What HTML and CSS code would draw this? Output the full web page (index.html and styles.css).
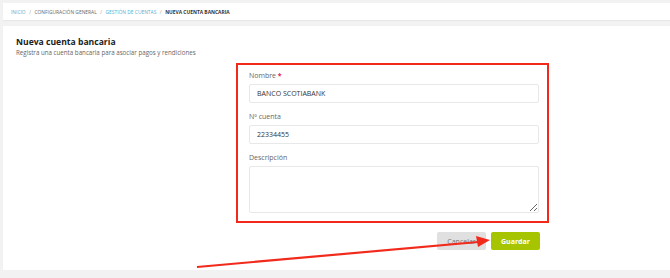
FILE: index.html
```html
<!DOCTYPE html>
<html lang="es">
<head>
  <meta charset="UTF-8" />
  <meta name="viewport" content="width=device-width, initial-scale=1.0"/>
  <title>Nueva cuenta bancaria</title>
  <link rel="stylesheet" href="styles.css">
</head>
<body>
  <nav class="breadcrumb">
    <a href="#" class="crumb-link">Inicio</a>
    <span class="sep">/</span>
    <span class="crumb">Configuración general</span>
    <span class="sep">/</span>
    <a href="#" class="crumb-link">Gestión de cuentas</a>
    <span class="sep">/</span>
    <span class="crumb current">Nueva cuenta bancaria</span>
  </nav>

  <div class="card">
    <h1>Nueva cuenta bancaria</h1>
    <p class="subtitle">Registra una cuenta bancaria para asociar pagos y rendiciones</p>

    <div class="form-col">
      <form class="form-box">
        <div class="field">
          <label>Nombre <span class="req">*</span></label>
          <input type="text" value="BANCO SCOTIABANK">
        </div>
        <div class="field">
          <label>Nº cuenta</label>
          <input type="text" value="22334455">
        </div>
        <div class="field">
          <label>Descripción</label>
          <textarea></textarea>
        </div>
      </form>

      <div class="actions">
        <button class="btn btn-cancel">Cancelar</button>
        <button class="btn btn-save">Guardar</button>
      </div>
    </div>

    <!-- annotation arrow -->
    <svg class="arrow" width="670" height="278" viewBox="0 0 670 278">
      <line x1="197" y1="267" x2="478" y2="242" stroke="#f22a1c" stroke-width="2.2"/>
      <polygon points="490,240 476,236 478,247" fill="#f22a1c"/>
    </svg>
  </div>
</body>
</html>
```

FILE: styles.css
```css
body {
  font-family: 'Open Sans', sans-serif;
  margin: 0;
  background: #f2f2f2;
  color: #333;
  overflow: hidden;
}

.breadcrumb {
  background: #fff;
  margin: 3px 0 0 3px;
  height: 17px;
  padding-left: 8px;
  display: flex;
  align-items: center;
  gap: 3.5px;
  font-size: 4.9px;
  text-transform: uppercase;
  box-shadow: 0 1px 1px rgba(0, 0, 0, 0.04);
}

.crumb-link {
  color: #4fb0d6;
  text-decoration: none;
}

.crumb {
  color: #666;
}

.sep {
  color: #999;
}

.current {
  color: #333;
  font-weight: bold;
}

.card {
  background: #fff;
  margin: 6px 0 0 3px;
  height: 244px;
  padding: 10px 0 0 13px;
  box-sizing: border-box;
}

h1 {
  font-size: 8.6px;
  margin: 0;
  color: #222;
  line-height: 12px;
}

.subtitle {
  font-size: 6.2px;
  color: #666;
  margin: 0;
  line-height: 9px;
}

.form-col {
  margin: 6px 0 0 220px;
  width: 313px;
}

.form-box {
  border: 2px solid #f2291a;
  padding: 6px 8px 8px 11px;
  box-sizing: border-box;
}

.field {
  margin-bottom: 9px;
}

.field:last-child {
  margin-bottom: 0;
}

label {
  display: block;
  font-size: 7px;
  color: #666;
  line-height: 10px;
  margin-bottom: 3px;
}

.req {
  color: #e0245e;
  font-weight: bold;
}

input,
textarea {
  display: block;
  width: 100%;
  box-sizing: border-box;
  border: 1px solid #e8e8e8;
  border-radius: 2px;
  font-family: 'Open Sans', sans-serif;
  font-size: 7px;
  color: #333;
  padding: 0 7px;
  margin: 0;
}

input {
  height: 19px;
}

textarea {
  height: 47px;
  resize: vertical;
}

.actions {
  display: flex;
  justify-content: flex-end;
  gap: 5px;
  margin-top: 9px;
  padding-right: 9px;
}

.btn {
  width: 49px;
  height: 18px;
  border: none;
  border-radius: 2px;
  font-family: 'Open Sans', sans-serif;
  font-size: 7px;
  padding: 0;
}

.btn-cancel {
  background: #e0e0e0;
  color: #777;
}

.btn-save {
  background: #a6c500;
  color: #fff;
  font-weight: bold;
}

.arrow {
  position: absolute;
  top: 0;
  left: 0;
  pointer-events: none;
}
```
